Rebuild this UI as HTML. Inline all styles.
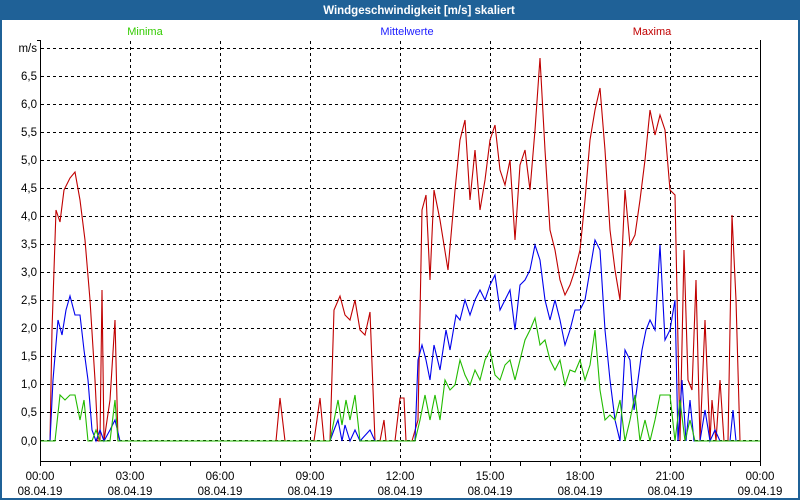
<!DOCTYPE html>
<html><head><meta charset="utf-8"><style>
html,body{margin:0;padding:0;width:800px;height:500px;overflow:hidden;background:#1f6197}
svg{display:block}
text{font-family:"Liberation Sans",sans-serif}
</style></head><body>
<svg width="800" height="500" xmlns="http://www.w3.org/2000/svg">
<rect x="0" y="0" width="800" height="500" fill="#1f6197"/>
<rect x="2" y="20" width="796" height="478" fill="#fff"/>
<text x="419" y="14" fill="#fff" font-size="11.5" font-weight="bold" text-anchor="middle">Windgeschwindigkeit [m/s] skaliert</text>
<text x="145" y="35" fill="#33cc00" font-size="11" text-anchor="middle">Minima</text>
<text x="407" y="35" fill="#2020ff" font-size="11" text-anchor="middle">Mittelwerte</text>
<text x="652" y="35" fill="#c00000" font-size="11" text-anchor="middle">Maxima</text>
<g stroke="#000" stroke-width="1" stroke-dasharray="3,3" fill="none">
<path d="M41 48.5H760M41 76.5H760M41 104.5H760M41 132.5H760M41 160.5H760M41 188.5H760M41 216.5H760M41 244.5H760M41 272.5H760M41 300.5H760M41 328.5H760M41 356.5H760M41 384.5H760M41 412.5H760M41 440.5H760"/>
<path d="M130.5 41V461M220.5 41V461M310.5 41V461M400.5 41V461M490.5 41V461M580.5 41V461M670.5 41V461"/>
</g>
<path d="M40.5 40V461.5H760.5V40M37 40.5H40" stroke="#000" fill="none"/>
<g stroke="#000"><path d="M40.5 461v5M70.5 461v5M100.5 461v5M130.5 461v5M160.5 461v5M190.5 461v5M220.5 461v5M250.5 461v5M280.5 461v5M310.5 461v5M340.5 461v5M370.5 461v5M400.5 461v5M430.5 461v5M460.5 461v5M490.5 461v5M520.5 461v5M550.5 461v5M580.5 461v5M610.5 461v5M640.5 461v5M670.5 461v5M700.5 461v5M730.5 461v5M760.5 461v5"/></g>
<g font-size="11.5" fill="#000" text-anchor="end">
<text x="37" y="52">m/s</text><text x="37" y="80">6,5</text><text x="37" y="108">6,0</text><text x="37" y="136">5,5</text><text x="37" y="164">5,0</text><text x="37" y="192">4,5</text><text x="37" y="220">4,0</text><text x="37" y="248">3,5</text><text x="37" y="276">3,0</text><text x="37" y="304">2,5</text><text x="37" y="332">2,0</text><text x="37" y="360">1,5</text><text x="37" y="388">1,0</text><text x="37" y="416">0,5</text><text x="37" y="445">0,0</text>
</g>
<g font-size="11.5" fill="#000" text-anchor="middle">
<text x="40" y="480">00:00</text><text x="40" y="495">08.04.19</text>
<text x="130" y="480">03:00</text><text x="130" y="495">08.04.19</text>
<text x="220" y="480">06:00</text><text x="220" y="495">08.04.19</text>
<text x="310" y="480">09:00</text><text x="310" y="495">08.04.19</text>
<text x="400" y="480">12:00</text><text x="400" y="495">08.04.19</text>
<text x="490" y="480">15:00</text><text x="490" y="495">08.04.19</text>
<text x="580" y="480">18:00</text><text x="580" y="495">08.04.19</text>
<text x="670" y="480">21:00</text><text x="670" y="495">08.04.19</text>
<text x="760" y="480">00:00</text><text x="760" y="495">09.04.19</text>
</g>
<g fill="none" stroke-width="1.1">
<polyline stroke="#c00000" points="41,441 50,441 52,330 56,210 60,222 64,190 70,178 75,172 80,200 85,240 90,300 95,380 98,441 100,441 102,290 104,441 110,400 115,320 118,441 276,441 280,398 285,441 314,441 320,398 324,441 330,441 334,310 340,296 345,315 350,320 355,300 360,330 365,335 370,312 375,441 380,441 384,420 386,441 395,441 400,398 404,398 406,441 412,441 418,420 422,210 426,195 430,280 434,190 440,220 448,270 455,190 460,140 465,120 470,200 475,150 480,210 485,180 490,140 495,125 500,170 505,185 510,160 515,240 520,165 525,150 530,190 535,130 540,58 545,150 550,230 555,250 560,280 565,295 570,285 575,270 580,250 585,200 590,140 595,110 600,88 605,150 610,230 615,270 620,300 625,190 630,245 635,235 640,200 645,160 650,110 655,135 660,115 665,130 670,190 675,195 680,441 684,250 688,380 692,390 696,280 700,441 705,320 710,441 712,400 716,441 720,380 724,441 728,441 732,215 736,300 740,441 760,441"/>
<polyline stroke="#0000ee" points="41,441 50,441 53,380 58,320 62,335 66,310 70,296 75,315 80,315 84,350 88,380 92,430 96,441 100,430 104,441 110,430 115,420 120,441 330,441 334,430 338,420 342,441 345,425 350,441 355,430 360,441 370,430 375,441 415,441 418,360 422,345 426,360 430,380 434,345 440,370 446,330 450,350 456,315 460,320 465,300 470,315 475,300 480,290 485,300 490,285 495,275 500,310 505,300 510,290 515,330 520,285 525,280 530,270 535,245 540,260 545,300 550,320 555,300 560,320 565,345 570,330 575,310 580,310 585,300 590,270 595,240 600,250 605,330 610,380 615,420 620,441 625,350 630,360 634,410 638,380 642,350 646,330 650,320 655,330 660,245 665,340 670,330 675,300 678,441 682,380 686,441 690,400 694,441 700,441 705,410 710,441 715,430 720,441 730,441 733,410 736,441 760,441"/>
<polyline stroke="#22bb00" points="41,441 55,441 60,395 65,400 70,395 75,395 80,420 84,400 88,441 92,441 96,430 100,441 110,441 115,400 118,441 330,441 338,400 342,425 346,400 350,420 355,395 360,441 375,441 415,441 420,420 425,395 430,420 435,395 440,420 445,380 450,390 455,385 460,360 465,375 470,385 475,370 480,380 485,360 490,350 495,375 500,380 505,365 510,360 515,380 520,360 525,340 530,330 535,318 540,345 545,340 550,360 555,370 560,360 565,385 570,370 575,372 580,360 585,380 590,365 595,330 600,390 605,420 610,415 615,420 620,400 625,441 630,420 635,395 640,441 645,420 650,441 655,420 660,395 670,395 675,441 680,400 685,441 690,420 695,441 760,441"/>
</g>
</svg>
</body></html>
